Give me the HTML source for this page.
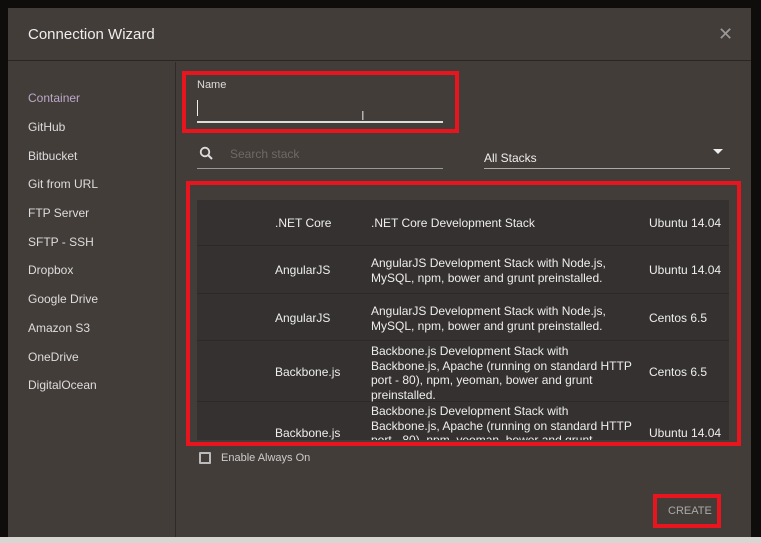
<!DOCTYPE html>
<html><head><style>
*{margin:0;padding:0;box-sizing:border-box}
body{width:761px;height:543px;background:#0e0d0c;position:relative;overflow:hidden;font-family:"Liberation Sans",sans-serif;color:#e8e4e0}
.dlg{position:absolute;left:8px;top:8px;width:743px;height:529px;background:#433d3a}
.bottom{position:absolute;left:0;top:537px;width:761px;height:6px;background:#d8d6d2}
.hdr{position:absolute;left:0;top:0;width:743px;height:53px;border-bottom:1px solid #2a2624}
.title{position:absolute;left:20px;top:18px;font-size:15px;color:#eee}
.x{position:absolute;left:710px;top:16px;font-size:18px;color:#999}
.side{position:absolute;left:0;top:54px;width:168px;height:475px;border-right:1px solid #2e2a28}
.side div{position:absolute;left:20px;font-size:12px;color:#ddd}
.abs{position:absolute}
.red{position:absolute;border:4px solid #e8141e}
.tbl{position:absolute;left:197px;top:200px;width:532px;height:240px;background:#353130;overflow:hidden}
.row{position:absolute;left:0;width:532px;border-bottom:1px solid #2c2928;font-size:12px;color:#eee}
.row span{position:absolute;line-height:14.5px}
</style></head><body>
<div class="dlg">
 <div class="hdr"><div class="title">Connection Wizard</div><div class="x">✕</div></div>
 <div class="side">
  <div style="top:29px;color:#b9a9c7">Container</div>
  <div style="top:58px">GitHub</div>
  <div style="top:87px">Bitbucket</div>
  <div style="top:115px">Git from URL</div>
  <div style="top:144px">FTP Server</div>
  <div style="top:173px">SFTP - SSH</div>
  <div style="top:201px">Dropbox</div>
  <div style="top:230px">Google Drive</div>
  <div style="top:259px">Amazon S3</div>
  <div style="top:288px">OneDrive</div>
  <div style="top:316px">DigitalOcean</div>
 </div>
</div>
<div class="bottom"></div>
<div class="abs" style="left:197px;top:79px;font-size:11px;color:#ddd">Name</div>
<div class="abs" style="left:197px;top:100px;width:1px;height:16px;background:#eee"></div>
<div class="abs" style="left:197px;top:121px;width:246px;height:2px;background:#ddd"></div>
<div class="abs" style="left:361px;top:108px;font-size:13px;color:#ccc">I</div>
<svg class="abs" style="left:199px;top:146px" width="15" height="15" viewBox="0 0 15 15"><circle cx="6" cy="6" r="4.3" fill="none" stroke="#ddd" stroke-width="1.8"/><path d="M9 9l4 4" stroke="#ddd" stroke-width="2"/></svg>
<div class="abs" style="left:230px;top:147px;font-size:12px;color:#6f6966">Search stack</div>
<div class="abs" style="left:197px;top:168px;width:246px;height:1px;background:#999"></div>
<div class="abs" style="left:484px;top:151px;font-size:12px;color:#eee">All Stacks</div>
<div class="abs" style="left:713px;top:149px;width:0;height:0;border-left:5px solid transparent;border-right:5px solid transparent;border-top:5px solid #eee"></div>
<div class="abs" style="left:484px;top:168px;width:246px;height:1px;background:#aaa"></div>
<div class="tbl">
 <div class="row" style="top:0;height:46px"><span style="left:78px;top:16px">.NET Core</span><span style="left:174px;top:16px">.NET Core Development Stack</span><span style="left:452px;top:16px">Ubuntu 14.04</span></div>
 <div class="row" style="top:46px;height:48px"><span style="left:78px;top:17px">AngularJS</span><span style="left:174px;top:10px">AngularJS Development Stack with Node.js,<br>MySQL, npm, bower and grunt preinstalled.</span><span style="left:452px;top:17px">Ubuntu 14.04</span></div>
 <div class="row" style="top:94px;height:47px"><span style="left:78px;top:17px">AngularJS</span><span style="left:174px;top:10px">AngularJS Development Stack with Node.js,<br>MySQL, npm, bower and grunt preinstalled.</span><span style="left:452px;top:17px">Centos 6.5</span></div>
 <div class="row" style="top:141px;height:61px"><span style="left:78px;top:24px">Backbone.js</span><span style="left:174px;top:3px">Backbone.js Development Stack with<br>Backbone.js, Apache (running on standard HTTP<br>port - 80), npm, yeoman, bower and grunt<br>preinstalled.</span><span style="left:452px;top:24px">Centos 6.5</span></div>
 <div class="row" style="top:202px;height:61px"><span style="left:78px;top:24px">Backbone.js</span><span style="left:174px;top:2px">Backbone.js Development Stack with<br>Backbone.js, Apache (running on standard HTTP<br>port - 80), npm, yeoman, bower and grunt</span><span style="left:452px;top:24px">Ubuntu 14.04</span></div>
</div>
<div class="abs" style="left:199px;top:452px;width:12px;height:12px;border:2px solid #bbb;border-radius:1px"></div>
<div class="abs" style="left:221px;top:452px;font-size:11px;color:#ccc">Enable Always On</div>
<div class="abs" style="left:668px;top:505px;font-size:11px;color:#aaa">CREATE</div>
<div class="red" style="left:182px;top:71px;width:277px;height:62px"></div>
<div class="red" style="left:186px;top:181px;width:555px;height:265px"></div>
<div class="red" style="left:653px;top:494px;width:68px;height:34px"></div>
</body></html>
